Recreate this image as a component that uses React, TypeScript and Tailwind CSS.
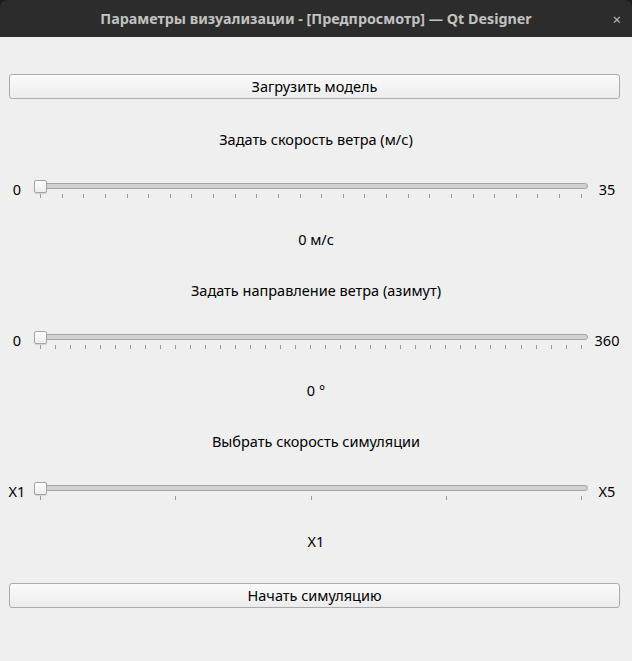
const font = { fontFamily: '"Noto Sans", "DejaVu Sans", sans-serif' };

function Slider({ ticks }: { ticks: number }) {
  return (
    <div className="relative h-[18px] flex-1">
      <div className="absolute left-0 right-0 top-[3px] h-[6px] rounded-[3px] border border-[#a6a6a6] bg-[#d2d2d2]" />
      <div className="absolute left-0 top-0 h-[13px] w-[13px] rounded-[2px] border border-[#a4a4a4] bg-gradient-to-b from-[#ffffff] to-[#ececec] shadow-[0_1px_1px_rgba(0,0,0,0.12)]" />
      <div className="absolute left-[6px] right-[6px] top-[14px] flex justify-between">
        {Array.from({ length: ticks }).map((_, i) => (
          <div key={i} className="h-[4px] w-px bg-[#9a9a9a]" />
        ))}
      </div>
    </div>
  );
}

function Section({
  title,
  min,
  max,
  ticks,
  value,
}: {
  title: string;
  min: string;
  max: string;
  ticks: number;
  value: string;
}) {
  return (
    <div className="flex flex-col">
      <div className="mt-[31px] flex h-[20px] items-center justify-center">{title}</div>
      <div className="mt-[30px] flex h-[18px] items-center">
        <div className="ml-[7px] w-[20px] pt-[2px] text-center">{min}</div>
        <div className="ml-[7px] mr-[5px] flex flex-1">
          <Slider ticks={ticks} />
        </div>
        <div className="mr-[11px] w-[28px] pt-[2px] text-center">{max}</div>
      </div>
      <div className="mt-[32px] flex h-[20px] items-center justify-center">{value}</div>
    </div>
  );
}

function Button({ children }: { children: string }) {
  return (
    <div className="ml-[9px] mr-[12px] flex h-[25px] items-center justify-center rounded-[3px] border border-[#ababab] bg-gradient-to-b from-[#fbfbfb] to-[#ececec]">
      {children}
    </div>
  );
}

export default function App() {
  return (
    <div className="h-[661px] w-[632px] bg-[#1c1c1c]" style={font}>
      <div className="relative flex h-[37px] items-center justify-center rounded-t-[8px] bg-[#2c2c2c]">
        <span className="text-[14.3px] font-bold text-[#c2c2c2]">
          Параметры визуализации - [Предпросмотр] — Qt Designer
        </span>
        <span className="absolute right-[11px] top-[8px] text-[15px] text-[#bbbbbb]">×</span>
      </div>
      <div className="h-[624px] bg-[#efefef] text-[14.5px] text-black">
        <div className="h-[37px]" />
        <Button>Загрузить модель</Button>
        <Section title="Задать скорость ветра (м/с)" min="0" max="35" ticks={26} value="0 м/с" />
        <Section title="Задать направление ветра (азимут)" min="0" max="360" ticks={37} value="0 °" />
        <Section title="Выбрать скорость симуляции" min="X1" max="X5" ticks={5} value="X1" />
        <div className="h-[31px]" />
        <Button>Начать симуляцию</Button>
      </div>
    </div>
  );
}
